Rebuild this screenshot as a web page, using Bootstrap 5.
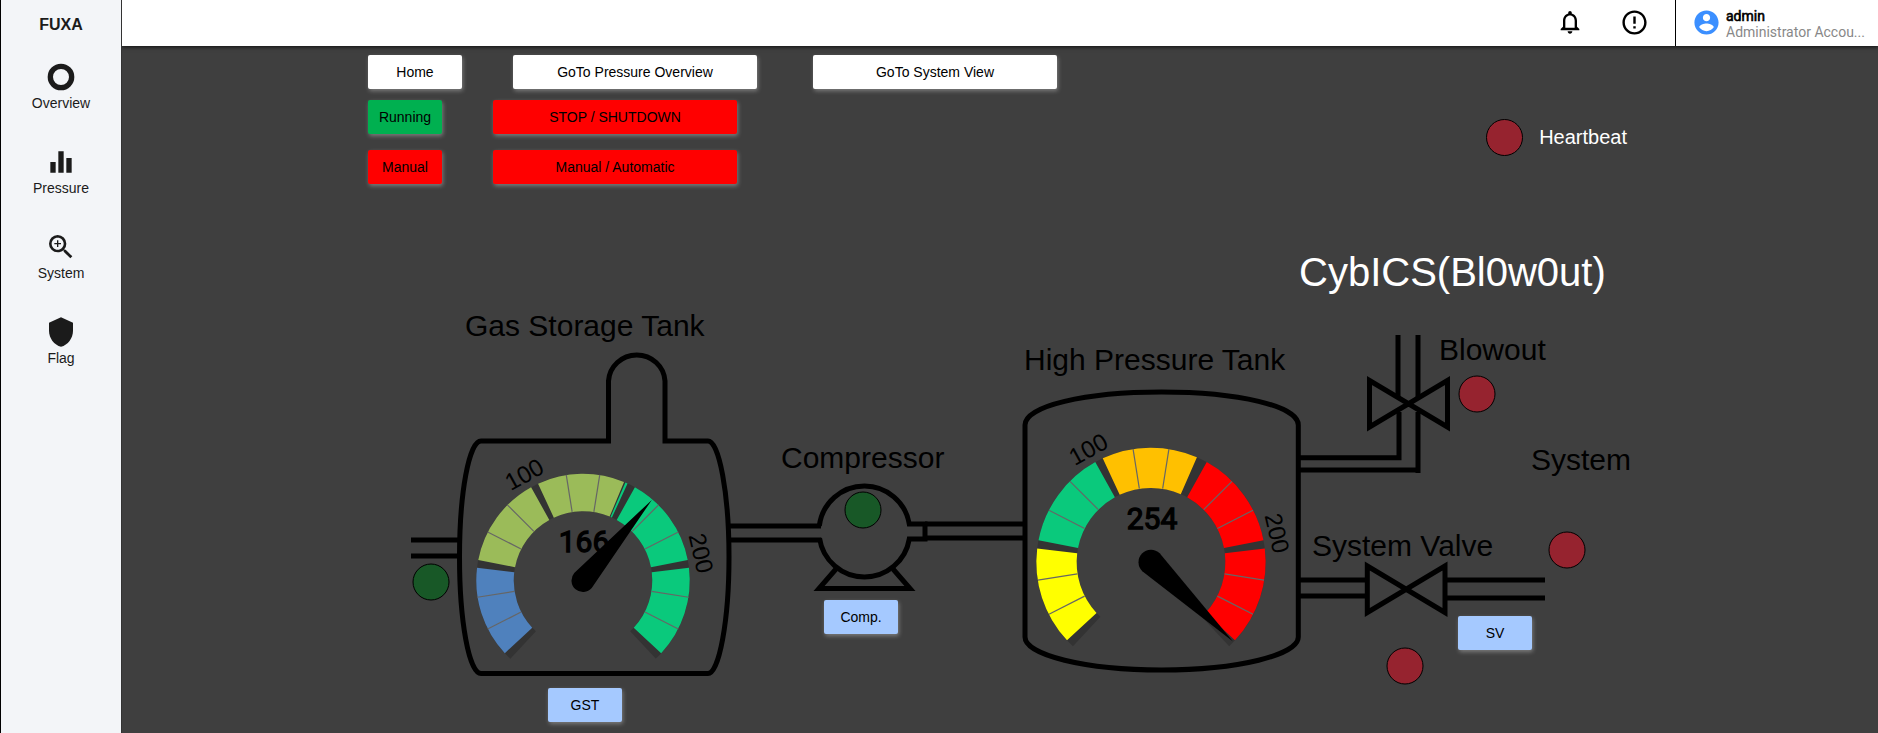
<!DOCTYPE html>
<html lang="en">
<head>
<meta charset="utf-8">
<meta name="viewport" content="width=device-width, initial-scale=1">
<title>FUXA</title>
<link href="https://cdn.jsdelivr.net/npm/bootstrap@5.3.0/dist/css/bootstrap.min.css" rel="stylesheet">
<style>
  body { font-family: "Liberation Sans", Arial, sans-serif; font-size: 14px; line-height: 20px; background: #3f3f3f; color: #000; }
  .side { width: 122px; background: #f3f5f8; border-left: 1px solid #000; border-right: 1px solid #333; z-index: 2; }
  .side-title { font-size: 16px; font-weight: bold; line-height: 24px; color: #1b1b1b; padding: 13px 0 24px; }
  .side-link { height: 85px; color: #1b1b1b; text-decoration: none; }
  .side-link svg, .side-link span { display: block; }
  .topbar { height: 46px; background: #fff; box-shadow: 0 1px 4px rgba(0,0,0,.75); font-family: Roboto, sans-serif; line-height: 16px; }
  .icon-btn { width: 65px; border: 0; background: none; padding: 0 0 2px; color: #000; }
  .user { width: 203px; border-left: 1px solid #000; padding: 0 10px 0 16px; gap: 5px; }
  .user svg { margin-bottom: 2px; }
  .user-text { padding-top: 2px; }
  .user-name { color: #000; -webkit-text-stroke: .6px #000; }
  .user-role { color: #888; }
  .stage { width: 1280px; }
  .tools { padding: 9px 13px 0 8px; }
  .ctl { height: 34px; border: 0; border-radius: 2px; padding: 0; color: #000; background: #fff; box-shadow: 1px 2px 4px rgba(255,255,255,.32); }
  .ctl-sm { width: 74px; }
  .ctl-home { width: 94px; }
  .ctl-lg { width: 244px; }
  .ctl-go { background: #00b050; }
  .ctl-stop { background: #f00; }
  .ctl-blue { background: #a5c9ff; }
  .g-51 { margin-left: 51px; }
  .g-56 { margin-left: 56px; }
  .row-status { margin-top: 11px; }
  .lamp { width: 37px; height: 37px; border-radius: 50%; background: #96232f; border: 1px solid #000; }
  .beat { font-size: 20px; line-height: 24px; color: #fff; gap: 16px; padding-top: 64px; }
  .beat-label { padding-top: 6px; }
  .diagram { display: block; width: 100%; }
  .pipe { fill: none; stroke: #000; stroke-width: 5; }
  .led-on { fill: #185827; stroke: #000; }
  .led-off { fill: #96232f; stroke: #000; }
  .tag { font-size: 30px; }
  .headline { font-size: 40px; fill: #fff; }
  .scale-no { font-size: 24px; text-anchor: middle; }
  .reading { font: 30px Roboto, sans-serif; text-anchor: middle; stroke: #000; stroke-width: 1.3; }
  .ring { fill: none; }
  .minor { stroke: #666; stroke-width: 1.2; }
  .comp-btn { left: 464px; top: 416px; }
  .gst-btn { left: 188px; top: 504px; }
  .sv-btn { left: 1098px; top: 432px; }
</style>
</head>
<body>
<div class="d-flex min-vh-100">
  <nav class="side d-flex flex-column flex-shrink-0 text-center" aria-label="Views">
    <div class="side-title">FUXA</div>
    <a class="side-link d-flex flex-column align-items-center" href="#overview">
      <svg width="32" height="32" viewBox="0 0 24 24"><circle cx="12" cy="12" r="8" fill="none" stroke="currentColor" stroke-width="4"/></svg>
      <span>Overview</span></a>
    <a class="side-link d-flex flex-column align-items-center" href="#pressure">
      <svg width="32" height="32" viewBox="0 0 24 24" fill="currentColor"><path d="M10 20h4V4h-4v16zm-6 0h4v-8H4v8zM16 9v11h4V9h-4z"/></svg>
      <span>Pressure</span></a>
    <a class="side-link d-flex flex-column align-items-center" href="#system">
      <svg width="32" height="32" viewBox="0 0 24 24" fill="currentColor"><path d="M15.5 14h-.79l-.28-.27A6.471 6.471 0 0 0 16 9.5 6.5 6.5 0 1 0 9.5 16c1.61 0 3.09-.59 4.23-1.57l.27.28v.79l5 4.99L20.49 19l-4.99-5zm-6 0C7.01 14 5 11.99 5 9.5S7.01 5 9.5 5 14 7.01 14 9.5 11.99 14 9.5 14z"/><path d="M12 10h-2v2H9v-2H7V9h2V7h1v2h2v1z"/></svg>
      <span>System</span></a>
    <a class="side-link d-flex flex-column align-items-center" href="#flag">
      <svg width="32" height="32" viewBox="0 0 24 24" fill="currentColor"><path d="M12 1L3 5v6c0 5.55 3.84 10.74 9 12 5.16-1.26 9-6.45 9-12V5l-9-4z"/></svg>
      <span>Flag</span></a>
  </nav>

  <div class="flex-grow-1 d-flex flex-column overflow-hidden">
    <header class="topbar d-flex justify-content-end flex-shrink-0">
      <button class="icon-btn" type="button" aria-label="Alarms"><svg width="28" height="28" viewBox="0 0 24 24" fill="currentColor"><path d="M12 22c1.1 0 2-.9 2-2h-4c0 1.1.9 2 2 2zm6-6v-5c0-3.07-1.63-5.64-4.5-6.32V4c0-.83-.67-1.5-1.5-1.5s-1.5.67-1.5 1.5v.68C7.64 5.36 6 7.92 6 11v5l-2 2v1h16v-1l-2-2zm-2 1H8v-6c0-2.48 1.51-4.5 4-4.5s4 2.02 4 4.5v6z"/></svg></button>
      <button class="icon-btn me-2" type="button" aria-label="Information"><svg width="29" height="29" viewBox="0 0 24 24" fill="currentColor"><path d="M11 15h2v2h-2zm0-8h2v6h-2zm.99-5C6.47 2 2 6.48 2 12s4.47 10 9.99 10C17.52 22 22 17.52 22 12S17.52 2 11.99 2zM12 20c-4.42 0-8-3.58-8-8s3.58-8 8-8 8 3.58 8 8-3.58 8-8 8z"/></svg></button>
      <div class="user d-flex align-items-center">
        <svg class="flex-shrink-0" width="29" height="29" viewBox="0 0 24 24" fill="#3b8fff"><path d="M12 2C6.48 2 2 6.48 2 12s4.48 10 10 10 10-4.48 10-10S17.52 2 12 2zm0 3c1.66 0 3 1.34 3 3s-1.34 3-3 3-3-1.34-3-3 1.34-3 3-3zm0 14.2c-2.5 0-4.71-1.28-6-3.22.03-1.99 4-3.08 6-3.08 1.99 0 5.97 1.09 6 3.08-1.29 1.94-3.5 3.22-6 3.22z"/></svg>
        <div class="user-text text-nowrap">
          <div class="user-name">admin</div>
          <div class="user-role">Administrator Accou...</div>
        </div>
      </div>
    </header>

    <main class="stage mx-auto">
      <div class="tools d-flex justify-content-between">
        <div>
          <div class="d-flex">
            <button class="ctl ctl-home" type="button">Home</button>
            <button class="ctl ctl-lg g-51" type="button">GoTo Pressure Overview</button>
            <button class="ctl ctl-lg g-56" type="button">GoTo System View</button>
          </div>
          <div class="d-flex row-status">
            <button class="ctl ctl-sm ctl-go" type="button">Running</button>
            <button class="ctl ctl-lg ctl-stop g-51" type="button">STOP / SHUTDOWN</button>
          </div>
          <div class="d-flex mt-3">
            <button class="ctl ctl-sm ctl-stop" type="button">Manual</button>
            <button class="ctl ctl-lg ctl-stop g-51" type="button">Manual / Automatic</button>
          </div>
        </div>
        <div class="beat d-flex">
          <span class="lamp"></span>
          <span class="beat-label">Heartbeat</span>
        </div>
      </div>

      <div class="position-relative">
        <svg class="diagram" viewBox="360 184 1280 548" role="img" aria-label="Gas plant diagram">
          <!-- gas storage tank and inlet -->
          <path class="pipe" d="M411 540H459M411 556H459"/>
          <path class="pipe" d="M481 441H608.5V381A28.3 27.7 0 0 1 665 381V441H708C719 441 729 493 729 557S719 673.5 708 673.5H481C469 673.5 459.500 621 459.500 557S469 441 481 441Z"/>
          <!-- compressor -->
          <path class="pipe" d="M730 526H821M730 540H821"/>
          <path class="pipe" d="M819.300 526A45.500 45.500 0 0 1 864.500 486A45.500 45.500 0 0 1 909.300 524H925V539H909.300A45.500 45.500 0 0 1 864.500 577A45.500 45.500 0 0 1 819.500 538"/>
          <path class="pipe" d="M836 569L819 588.500H910L893 569"/>
          <path class="pipe" d="M925 524H1025M925 538H1025"/>
          <!-- high pressure tank -->
          <path class="pipe" d="M1025 425C1025 406 1085 392 1161.500 392S1298.300 406 1298.300 425V637C1298.300 655 1238 670 1161.500 670S1025 655 1025 637Z"/>
          <!-- blowout line and valve -->
          <path class="pipe" d="M1398 335V397M1418 335V397M1300 457.700H1399V412M1300 470H1418M1418 412V473"/>
          <path class="pipe" d="M1369.500 380.500L1447.500 427V380.500L1369.500 427Z"/>
          <!-- system line and valve -->
          <path class="pipe" d="M1300 580H1367M1300 596H1367M1445 580H1545M1445 598H1545"/>
          <path class="pipe" d="M1367.300 566L1445 612.500V566L1367.300 612.500Z"/>

          <!-- storage gauge, 0 to 250 over 270 degrees -->
          <g transform="translate(583 580.500)">
            <g class="ring" stroke-width="37.5" transform="rotate(135)">
              <circle r="88" pathLength="360" stroke="#333" stroke-dasharray="274.200 360" transform="rotate(-2.100)"/>
              <circle r="88" pathLength="360" stroke="#4f81bd" stroke-dasharray="49.800 360" transform="rotate(2.100)"/>
              <circle r="88" pathLength="360" stroke="#9bbb59" stroke-dasharray="49.800 360" transform="rotate(56.100)"/>
              <circle r="88" pathLength="360" stroke="#9bbb59" stroke-dasharray="47.500 360" transform="rotate(110.100)"/>
              <circle r="88" pathLength="360" stroke="#0ac97c" stroke-dasharray="1.300 360" transform="rotate(158.400)"/>
              <circle r="88" pathLength="360" stroke="#0ac97c" stroke-dasharray="49.800 360" transform="rotate(164.100)"/>
              <circle r="88" pathLength="360" stroke="#0ac97c" stroke-dasharray="49.800 360" transform="rotate(218.100)"/>
            </g>
            <path class="minor" transform="rotate(153)" d="M69.500 0H107"/><path class="minor" transform="rotate(171)" d="M69.500 0H107"/>
            <path class="minor" transform="rotate(207)" d="M69.500 0H107"/><path class="minor" transform="rotate(225)" d="M69.500 0H107"/>
            <path class="minor" transform="rotate(261)" d="M69.500 0H107"/><path class="minor" transform="rotate(279)" d="M69.500 0H107"/>
            <path class="minor" transform="rotate(315)" d="M69.500 0H107"/><path class="minor" transform="rotate(333)" d="M69.500 0H107"/>
            <path class="minor" transform="rotate(369)" d="M69.500 0H107"/><path class="minor" transform="rotate(387)" d="M69.500 0H107"/>
            <text class="scale-no" y="-113" transform="rotate(-29)">100</text>
            <text class="scale-no" y="-113" transform="rotate(77)">200</text>
            <text class="reading" x="1" y="-29">166</text>
            <path transform="rotate(-49.500)" d="M106 0L0-11.500A11.500 11.500 0 1 0 0 11.500Z"/>
          </g>

          <!-- pressure gauge -->
          <g transform="translate(1151 562.300)">
            <g class="ring" stroke-width="40.3" transform="rotate(135)">
              <circle r="94.500" pathLength="360" stroke="#333" stroke-dasharray="274.200 360" transform="rotate(-2.100)"/>
              <circle r="94.500" pathLength="360" stroke="#ff0" stroke-dasharray="49.800 360" transform="rotate(2.100)"/>
              <circle r="94.500" pathLength="360" stroke="#0ac97c" stroke-dasharray="49.800 360" transform="rotate(56.100)"/>
              <circle r="94.500" pathLength="360" stroke="#ffc000" stroke-dasharray="48.500 360" transform="rotate(110.100)"/>
              <circle r="94.500" pathLength="360" stroke="red" stroke-dasharray="49.800 360" transform="rotate(164.100)"/>
              <circle r="94.500" pathLength="360" stroke="red" stroke-dasharray="49.800 360" transform="rotate(218.100)"/>
            </g>
            <path class="minor" transform="rotate(153)" d="M74.500 0H114.500"/><path class="minor" transform="rotate(171)" d="M74.500 0H114.500"/>
            <path class="minor" transform="rotate(207)" d="M74.500 0H114.500"/><path class="minor" transform="rotate(225)" d="M74.500 0H114.500"/>
            <path class="minor" transform="rotate(261)" d="M74.500 0H114.500"/><path class="minor" transform="rotate(279)" d="M74.500 0H114.500"/>
            <path class="minor" transform="rotate(315)" d="M74.500 0H114.500"/><path class="minor" transform="rotate(333)" d="M74.500 0H114.500"/>
            <path class="minor" transform="rotate(369)" d="M74.500 0H114.500"/><path class="minor" transform="rotate(387)" d="M74.500 0H114.500"/>
            <text class="scale-no" y="-121" transform="rotate(-29)">100</text>
            <text class="scale-no" y="-121" transform="rotate(77)">200</text>
            <text class="reading" x="1" y="-33">254</text>
            <path transform="rotate(44)" d="M114 0L0-12.500A12.500 12.500 0 1 0 0 12.500Z"/>
          </g>

          <circle class="led-on" cx="431" cy="582" r="18"/>
          <circle class="led-on" cx="863" cy="510" r="18"/>
          <circle class="led-off" cx="1477" cy="394" r="18"/>
          <circle class="led-off" cx="1567" cy="550" r="18"/>
          <circle class="led-off" cx="1405" cy="666" r="18"/>

          <text class="headline" x="1299" y="286">CybICS(Bl0w0ut)</text>
          <text class="tag" x="465" y="336">Gas Storage Tank</text>
          <text class="tag" x="781" y="468">Compressor</text>
          <text class="tag" x="1024" y="370">High Pressure Tank</text>
          <text class="tag" x="1439" y="360">Blowout</text>
          <text class="tag" x="1531" y="470">System</text>
          <text class="tag" x="1312" y="556">System Valve</text>
        </svg>
        <button class="ctl ctl-sm ctl-blue position-absolute comp-btn" type="button">Comp.</button>
        <button class="ctl ctl-sm ctl-blue position-absolute gst-btn" type="button">GST</button>
        <button class="ctl ctl-sm ctl-blue position-absolute sv-btn" type="button">SV</button>
      </div>
    </main>
  </div>
</div>
<script src="https://cdn.jsdelivr.net/npm/bootstrap@5.3.0/dist/js/bootstrap.bundle.min.js"></script>
</body>
</html>
